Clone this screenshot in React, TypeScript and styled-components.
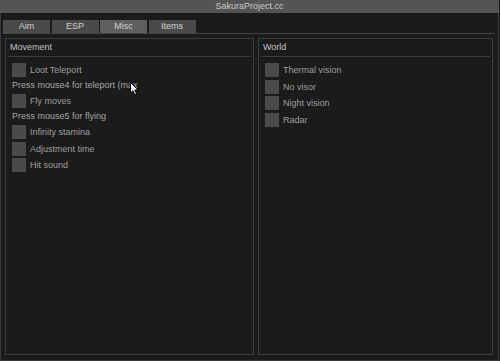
import React from "react";
import styled, { createGlobalStyle } from "styled-components";

const GlobalStyle = createGlobalStyle`
  html, body {
    margin: 0;
    padding: 0;
    background: #1b1b1b;
  }
  body {
    font-family: "Liberation Sans", Arial, sans-serif;
    font-size: 9px;
  }
`;

const Window = styled.div`
  position: relative;
  width: 499px;
  height: 361px;
  box-sizing: border-box;
  background: #1b1b1b;
  border: 1px solid #3a3a3a;
  border-top: none;
  display: flex;
  flex-direction: column;
`;

const TitleBar = styled.div`
  height: 13px;
  margin: 0 -1px;
  background: #545454;
  color: #cacaca;
  font-size: 9px;
  line-height: 13px;
  text-align: center;
`;

const TabRow = styled.div`
  display: flex;
  gap: 1.5px;
  margin: 7px 3px 0 2px;
  border-bottom: 1px solid #434343;
`;

const Tab = styled.div<{ $active?: boolean }>`
  width: 47px;
  height: 13px;
  background: ${(p) => (p.$active ? "#5e5e5e" : "#4a4a4a")};
  color: #d0d0d0;
  font-size: 9px;
  line-height: 13px;
  text-align: center;
`;

const Panels = styled.div`
  flex: 1;
  display: grid;
  grid-template-columns: 249px 235px;
  gap: 4px;
  margin: 4px 0 5px 4px;
`;

const Panel = styled.div`
  border: 1px solid #3d3d3d;
  background: #1b1b1b;
  display: flex;
  flex-direction: column;
`;

const PanelHeader = styled.div`
  height: 17px;
  line-height: 17px;
  margin: 0 2px;
  padding-left: 2px;
  border-bottom: 1px solid #3d3d3d;
  color: #c2c2c2;
  font-size: 9px;
`;

const PanelBody = styled.div`
  display: flex;
  flex-direction: column;
  gap: 2.7px;
  padding: 6px 6px 0;
`;

const CheckRow = styled.div`
  display: flex;
  align-items: center;
  gap: 4px;
  height: 14px;
`;

const Box = styled.div`
  width: 14px;
  height: 14px;
  background: #4a4a4a;
`;

const Label = styled.span`
  color: #9e9e9e;
  font-size: 9px;
  line-height: 14px;
`;

const Hint = styled.div`
  color: #a6a6a6;
  font-size: 9px;
  line-height: 11.6px;
  height: 11.6px;
  white-space: nowrap;
`;

const Cursor = styled.svg`
  position: absolute;
  left: 129px;
  top: 82px;
`;

const movement: { label: string; hint?: string }[] = [
  { label: "Loot Teleport", hint: "Press mouse4 for teleport (max" },
  { label: "Fly moves", hint: "Press mouse5 for flying" },
  { label: "Infinity stamina" },
  { label: "Adjustment time" },
  { label: "Hit sound" },
];

const world = ["Thermal vision", "No visor", "Night vision", "Radar"];

const tabs = ["Aim", "ESP", "Misc", "Items"];

export default function App() {
  return (
    <>
      <GlobalStyle />
      <Window>
        <TitleBar>SakuraProject.cc</TitleBar>
        <TabRow>
          {tabs.map((t) => (
            <Tab key={t} $active={t === "Misc"}>
              {t}
            </Tab>
          ))}
        </TabRow>
        <Panels>
          <Panel>
            <PanelHeader>Movement</PanelHeader>
            <PanelBody>
              {movement.map((m) => (
                <React.Fragment key={m.label}>
                  <CheckRow>
                    <Box />
                    <Label>{m.label}</Label>
                  </CheckRow>
                  {m.hint && <Hint>{m.hint}</Hint>}
                </React.Fragment>
              ))}
            </PanelBody>
          </Panel>
          <Panel>
            <PanelHeader>World</PanelHeader>
            <PanelBody>
              {world.map((w) => (
                <CheckRow key={w}>
                  <Box />
                  <Label>{w}</Label>
                </CheckRow>
              ))}
            </PanelBody>
          </Panel>
        </Panels>
        <Cursor width="10" height="14" viewBox="0 0 10 14">
          <path
            d="M0.5 0.5 L0.5 11 L3 8.7 L4.9 12.8 L6.6 12 L4.8 8.1 L8 8.1 Z"
            fill="#fff"
            stroke="#000"
            strokeWidth="1"
            strokeLinejoin="round"
          />
        </Cursor>
      </Window>
    </>
  );
}
